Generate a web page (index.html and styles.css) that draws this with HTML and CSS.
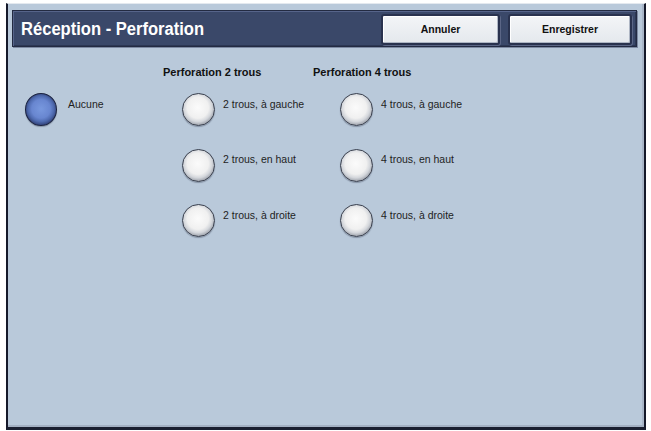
FILE: index.html
```html
<!DOCTYPE html>
<html lang="fr">
<head>
<meta charset="utf-8">
<link rel="stylesheet" href="styles.css">
</head>
<body>
<div class="frame">
  <div class="header">
    <div class="title">Réception - Perforation</div>
    <div class="actions">
      <button class="btn btn-cancel">Annuler</button>
      <button class="btn btn-save">Enregistrer</button>
    </div>
  </div>
  <div class="content">
    <div class="col col-none">
      <div class="opt opt-none"><span class="radio selected"></span><span class="lbl">Aucune</span></div>
    </div>
    <div class="col col-2">
      <div class="colhead">Perforation 2 trous</div>
      <div class="opt"><span class="radio"></span><span class="lbl">2 trous, à gauche</span></div>
      <div class="opt"><span class="radio"></span><span class="lbl">2 trous, en haut</span></div>
      <div class="opt"><span class="radio"></span><span class="lbl">2 trous, à droite</span></div>
    </div>
    <div class="col col-4">
      <div class="colhead">Perforation 4 trous</div>
      <div class="opt"><span class="radio"></span><span class="lbl">4 trous, à gauche</span></div>
      <div class="opt"><span class="radio"></span><span class="lbl">4 trous, en haut</span></div>
      <div class="opt"><span class="radio"></span><span class="lbl">4 trous, à droite</span></div>
    </div>
  </div>
</div>
</body>
</html>
```
FILE: styles.css
```css
html, body {
  margin: 0;
  padding: 0;
  background: #ffffff;
}
body {
  width: 651px;
  height: 431px;
  overflow: hidden;
  font-family: "Liberation Sans", Arial, sans-serif;
}
.frame {
  box-sizing: border-box;
  margin: 3px 0 0 6px;
  width: 640px;
  height: 427px;
  background: #b9c9da;
  border-left: 2px solid #15192a;
  border-right: 2px solid #15192a;
  border-bottom: 3px solid #1a1f30;
  border-top: 1px solid #e4e9ef;
  box-shadow: inset 0 -2px 0 #a3b0c2, inset -2px 0 0 #a9b6c8;
  display: flex;
  flex-direction: column;
}
.header {
  margin: 6px 7px 0 4px;
  height: 37px;
  box-sizing: border-box;
  background: #3a4869;
  border: 1px solid #232b42;
  box-shadow: inset 1px 1px 0 #56648a, inset -1px -1px 0 #2c3754, 1px 1px 0 #7d8aa3;
  display: flex;
  align-items: center;
  justify-content: space-between;
  padding: 0 4px 0 8px;
}
.title {
  color: #ffffff;
  font-family: "Liberation Sans", Arial, sans-serif;
  font-weight: bold;
  font-size: 18px;
  transform: scaleX(0.92);
  transform-origin: left center;
  white-space: nowrap;
  margin-top: 1px;
}
.actions {
  display: flex;
  gap: 8px;
  margin-top: 1px;
}
.btn {
  height: 31px;
  box-sizing: border-box;
  background: linear-gradient(#f3f5f7, #e4e8ed);
  border: 2px solid #29324e;
  border-radius: 3px;
  box-shadow: inset -1px -1px 0 #aeb6c4, inset 1px 1px 0 #ffffff, 1px 1px 0 #5b6686;
  font-family: "Liberation Sans", Arial, sans-serif;
  font-weight: bold;
  font-size: 10.5px;
  color: #111;
  padding: 0;
}
.btn-cancel { width: 119px; }
.btn-save { width: 124px; }
.content {
  flex: 1;
  display: flex;
  padding: 19px 0 0 17px;
}
.col {
  display: flex;
  flex-direction: column;
}
.col-none {
  width: 138px;
  padding-top: 16px;
}
.col-2 { width: 150px; }
.colhead {
  font-weight: bold;
  font-size: 11px;
  line-height: 13px;
  height: 13px;
  color: #111;
  margin-bottom: 3px;
  white-space: nowrap;
}
.opt {
  display: flex;
  align-items: center;
  height: 55.5px;
  gap: 8px;
}
.col-2 .opt { padding-left: 19px; }
.col-4 .opt { padding-left: 27px; }
.opt-none { gap: 11px; }
.lbl {
  font-size: 10.5px;
  color: #1e1e1e;
  margin-top: -12px;
  white-space: nowrap;
}
.radio {
  width: 33px;
  height: 33px;
  border-radius: 50%;
  box-sizing: border-box;
  border: 1px solid #3a404e;
  background: radial-gradient(circle at 48% 44%, #fbfbfb 0, #f0f0f0 45%, #d3d6db 60%, #9a9fa8 75%, #5f6572 100%);
  box-shadow: 0 1px 1px rgba(40,50,70,0.35);
  flex: none;
}
.opt-none .radio {
  width: 32px;
  height: 33px;
}
.radio.selected {
  border: 1px solid #1a2240;
  background: radial-gradient(circle at 50% 48%, #7898de 0, #6886d0 42%, #4f6bb0 58%, #2e3d72 76%, #1c264c 100%);
}
```
